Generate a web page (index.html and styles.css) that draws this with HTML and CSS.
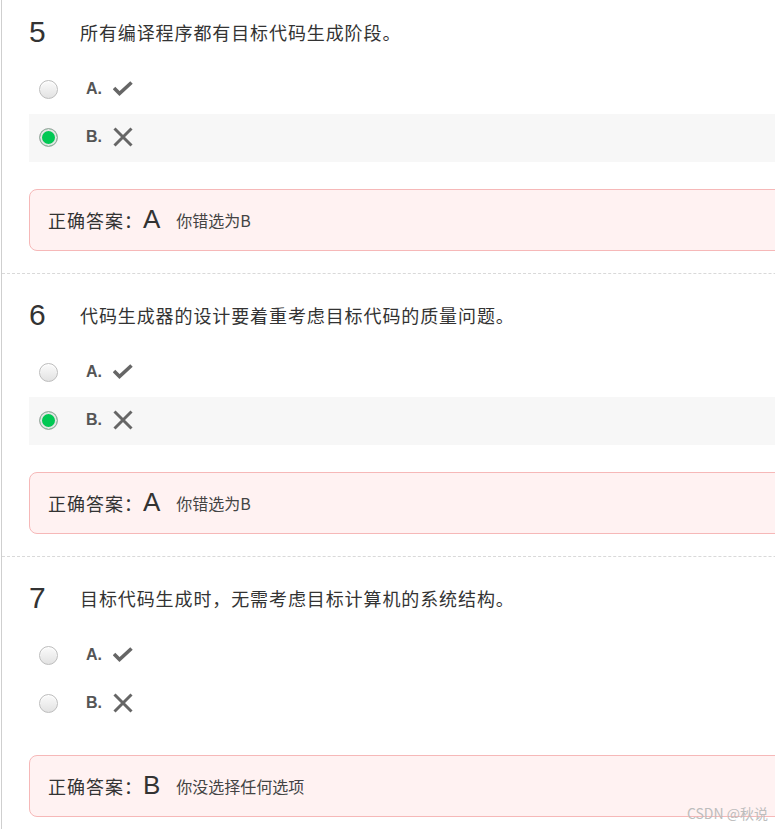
FILE: index.html
```html
<!DOCTYPE html>
<html lang="zh-CN">
<head>
<meta charset="utf-8">
<title>判断题</title>
<link rel="stylesheet" href="styles.css">
</head>
<body>
<div class="page">
  <section class="question">
    <div class="q-head">
      <span class="q-num">5</span>
      <span class="q-text">所有编译程序都有目标代码生成阶段。</span>
    </div>
    <div class="options">
      <div class="option">
        <span class="radio"></span>
        <span class="opt-label">A.</span>
        <svg class="icon" width="20" height="16" viewBox="0 0 20 16"><polyline points="1,7 6.5,12.5 18.5,1.5" fill="none" stroke="#666" stroke-width="3.6"/></svg>
      </div>
      <div class="option selected">
        <span class="radio checked"></span>
        <span class="opt-label">B.</span>
        <svg class="icon" width="20" height="20" viewBox="0 0 20 20"><path d="M1.5 1.5 L18.5 18.5 M18.5 1.5 L1.5 18.5" fill="none" stroke="#666" stroke-width="3"/></svg>
      </div>
    </div>
    <div class="answer">
      <span class="ans-label">正确答案：</span><span class="ans-key">A</span><span class="ans-note">你错选为B</span>
    </div>
  </section>

  <section class="question">
    <div class="q-head">
      <span class="q-num">6</span>
      <span class="q-text">代码生成器的设计要着重考虑目标代码的质量问题。</span>
    </div>
    <div class="options">
      <div class="option">
        <span class="radio"></span>
        <span class="opt-label">A.</span>
        <svg class="icon" width="20" height="16" viewBox="0 0 20 16"><polyline points="1,7 6.5,12.5 18.5,1.5" fill="none" stroke="#666" stroke-width="3.6"/></svg>
      </div>
      <div class="option selected">
        <span class="radio checked"></span>
        <span class="opt-label">B.</span>
        <svg class="icon" width="20" height="20" viewBox="0 0 20 20"><path d="M1.5 1.5 L18.5 18.5 M18.5 1.5 L1.5 18.5" fill="none" stroke="#666" stroke-width="3"/></svg>
      </div>
    </div>
    <div class="answer">
      <span class="ans-label">正确答案：</span><span class="ans-key">A</span><span class="ans-note">你错选为B</span>
    </div>
  </section>

  <section class="question">
    <div class="q-head">
      <span class="q-num">7</span>
      <span class="q-text">目标代码生成时，无需考虑目标计算机的系统结构。</span>
    </div>
    <div class="options">
      <div class="option">
        <span class="radio"></span>
        <span class="opt-label">A.</span>
        <svg class="icon" width="20" height="16" viewBox="0 0 20 16"><polyline points="1,7 6.5,12.5 18.5,1.5" fill="none" stroke="#666" stroke-width="3.6"/></svg>
      </div>
      <div class="option">
        <span class="radio"></span>
        <span class="opt-label">B.</span>
        <svg class="icon" width="20" height="20" viewBox="0 0 20 20"><path d="M1.5 1.5 L18.5 18.5 M18.5 1.5 L1.5 18.5" fill="none" stroke="#666" stroke-width="3"/></svg>
      </div>
    </div>
    <div class="answer">
      <span class="ans-label">正确答案：</span><span class="ans-key">B</span><span class="ans-note">你没选择任何选项</span>
    </div>
  </section>
</div>
<div class="watermark">CSDN @秋说</div>
</body>
</html>
```

FILE: styles.css
```css
html, body {
  margin: 0;
  padding: 0;
  background: #fff;
  overflow: hidden;
}

body {
  width: 775px;
  height: 829px;
  position: relative;
  font-family: "Liberation Sans", "Noto Sans CJK SC", Arial, sans-serif;
  color: #333;
}

.page {
  margin-left: 1px;
  border-left: 1px solid #cfcfcf;
  width: 1000px;
  min-height: 829px;
}

.question {
  padding-top: 0;
}

.question + .question {
  margin-top: 22px;
  border-top: 1px dashed #d9d9d9;
  padding-top: 9px;
}

.q-head {
  display: flex;
  align-items: center;
  box-sizing: border-box;
  height: 66px;
  padding-left: 27px;
  padding-bottom: 2px;
}

.q-num {
  width: 51px;
  flex: none;
  font-family: "Liberation Sans", Arial, sans-serif;
  font-size: 30px;
  line-height: 1;
  color: #333;
}

.q-text {
  font-family: "Noto Sans CJK SC", sans-serif;
  font-size: 18px;
  letter-spacing: 0.9px;
  line-height: 26px;
  color: #333;
}

.options {
  margin-left: 27px;
}

.option {
  display: flex;
  align-items: center;
  box-sizing: border-box;
  height: 48px;
  padding-left: 10px;
  padding-bottom: 2px;
}

.option.selected {
  background: #f7f7f7;
}

.radio {
  flex: none;
  box-sizing: border-box;
  width: 19px;
  height: 19px;
  border-radius: 50%;
  border: 1px solid #bdbdbd;
  background: linear-gradient(#fbfbfb, #e2e2e2);
  box-shadow: inset 0 1px 1px #fff;
}

.radio.checked {
  border: 1px solid #a9a9a9;
  background: #00c853;
  box-shadow: inset 0 0 0 2px #e4e4e4;
}

.opt-label {
  margin-left: 28px;
  width: 27px;
  font-family: "Liberation Sans", Arial, sans-serif;
  font-weight: bold;
  font-size: 16px;
  color: #555;
}

.icon {
  display: block;
}

.answer {
  margin-left: 27px;
  margin-top: 27px;
  box-sizing: border-box;
  height: 62px;
  border: 1px solid #f6b8b8;
  border-radius: 8px;
  background: #fff2f2;
  display: flex;
  align-items: center;
  padding-left: 18px;
}

.ans-label {
  font-family: "Noto Sans CJK SC", sans-serif;
  font-size: 18px;
  letter-spacing: 1px;
  color: #333;
}

.ans-key {
  font-family: "Liberation Sans", Arial, sans-serif;
  font-size: 26px;
  line-height: 1;
  color: #333;
  margin-top: -3px;
}

.ans-note {
  margin-left: 16px;
  font-family: "Noto Sans CJK SC", sans-serif;
  font-size: 16px;
  color: #444;
}

.watermark {
  position: absolute;
  right: 7px;
  bottom: 6px;
  font-family: "Noto Sans CJK SC", sans-serif;
  font-size: 14px;
  color: #bdbdbd;
}
```
